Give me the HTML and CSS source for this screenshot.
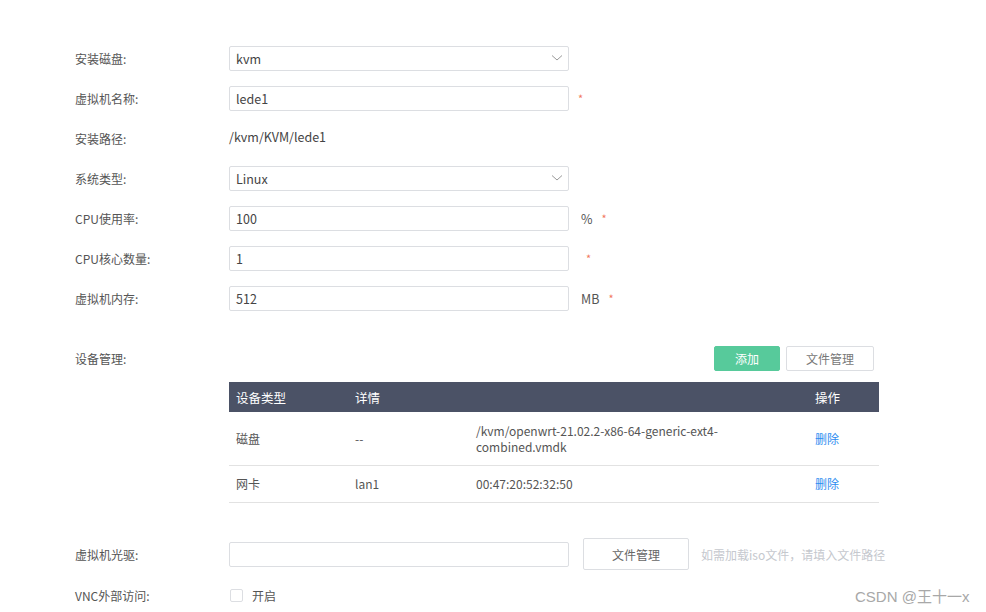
FILE: index.html
```html
<!DOCTYPE html>
<html lang="zh-CN">
<head>
    <meta charset="UTF-8">
    <title>虚拟机</title>
    <link rel="stylesheet" href="styles.css">
</head>
<body>
    <div class="form">
        <!-- basic settings -->
        <div class="row">
            <div class="label">安装磁盘:</div>
            <div class="select">
                <span>kvm</span>
                <svg width="12" height="8" viewBox="0 0 12 8"><path d="M1 1.5 L6 6 L11 1.5" fill="none" stroke="#9a9a9a" stroke-width="1"/></svg>
            </div>
        </div>
        <div class="row">
            <div class="label">虚拟机名称:</div>
            <div class="input">lede1</div>
            <span class="req">*</span>
        </div>
        <div class="row">
            <div class="label">安装路径:</div>
            <div class="plain">/kvm/KVM/lede1</div>
        </div>
        <div class="row">
            <div class="label">系统类型:</div>
            <div class="select">
                <span>Linux</span>
                <svg width="12" height="8" viewBox="0 0 12 8"><path d="M1 1.5 L6 6 L11 1.5" fill="none" stroke="#9a9a9a" stroke-width="1"/></svg>
            </div>
        </div>
        <div class="row">
            <div class="label">CPU使用率:</div>
            <div class="input">100</div>
            <span class="unit">%</span><span class="req">*</span>
        </div>
        <div class="row">
            <div class="label">CPU核心数量:</div>
            <div class="input">1</div>
            <span class="req req-far">*</span>
        </div>
        <div class="row">
            <div class="label">虚拟机内存:</div>
            <div class="input">512</div>
            <span class="unit">MB</span><span class="req">*</span>
        </div>

        <!-- devices -->
        <div class="row device-head">
            <div class="label">设备管理:</div>
            <div class="toolbar">
                <button class="btn btn-green">添加</button>
                <button class="btn">文件管理</button>
            </div>
        </div>
        <div class="table-wrap">
            <table class="devices">
                <colgroup>
                    <col style="width:119px">
                    <col style="width:121px">
                    <col style="width:339px">
                    <col>
                </colgroup>
                <thead>
                    <tr><th>设备类型</th><th>详情</th><th></th><th>操作</th></tr>
                </thead>
                <tbody>
                    <tr class="tall">
                        <td>磁盘</td><td>--</td>
                        <td>/kvm/openwrt-21.02.2-x86-64-generic-ext4-combined.vmdk</td>
                        <td><a href="#">删除</a></td>
                    </tr>
                    <tr>
                        <td>网卡</td><td>lan1</td><td>00:47:20:52:32:50</td>
                        <td><a href="#">删除</a></td>
                    </tr>
                </tbody>
            </table>
        </div>

        <!-- optical drive + vnc -->
        <div class="row cd-row">
            <div class="label">虚拟机光驱:</div>
            <div class="input"></div>
            <button class="btn btn-big">文件管理</button>
            <span class="hint">如需加载iso文件，请填入文件路径</span>
        </div>
        <div class="row vnc-row">
            <div class="label">VNC外部访问:</div>
            <label class="check"><span class="box"></span>开启</label>
        </div>
    </div>

    <div class="watermark">CSDN @王十一x</div>
</body>
</html>
```

FILE: styles.css
```css
html, body {
    margin: 0;
    padding: 0;
    background: #ffffff;
    color: #555;
    font-family: "Noto Sans CJK SC", "Noto Sans", sans-serif;
    font-size: 12px;
}

.form {
    padding: 38px 0 0 75px;
}

/* one form line */
.row {
    display: flex;
    align-items: center;
    height: 40px;
}

.label {
    width: 154px;
    flex-shrink: 0;
    color: #555;
}

.input,
.select {
    box-sizing: border-box;
    width: 340px;
    height: 25px;
    border: 1px solid #dcdee2;
    border-radius: 2px;
    padding: 0 6px;
    display: flex;
    align-items: center;
    color: #444;
    font-size: 12.5px;
}

.select {
    justify-content: space-between;
    padding-right: 5px;
}

.plain {
    color: #444;
    font-size: 12.5px;
    margin-top: -4px;
}

.unit {
    margin-left: 12px;
    color: #555;
    font-size: 12.5px;
}

.req {
    color: #ed4014;
    margin-left: 9px;
    font-size: 11px;
    opacity: 0.7;
}

.req-far {
    margin-left: 17px;
}

/* device management */
.device-head {
    margin-top: 20px;
}

.toolbar {
    width: 650px;
    display: flex;
    justify-content: flex-end;
    gap: 6px;
    padding-right: 5px;
    box-sizing: border-box;
}

.btn {
    box-sizing: border-box;
    height: 25px;
    min-width: 66px;
    padding: 0 19px;
    border: 1px solid #dcdee2;
    border-radius: 2px;
    background: #fff;
    color: #777;
    font-family: inherit;
    font-size: 12px;
}

.btn-green {
    background: #57ca9b;
    border-color: #57ca9b;
    color: #fff;
}

.table-wrap {
    padding: 4px 0 0 154px;
}

.devices {
    width: 650px;
    border-collapse: collapse;
    table-layout: fixed;
}

.devices th {
    background: #4b5266;
    color: #fff;
    font-weight: normal;
    text-align: left;
    height: 30px;
    padding: 0 7px;
    font-size: 12.5px;
}

.devices td {
    height: 36px;
    padding: 0 7px;
    border-bottom: 1px solid #e2e2e2;
    color: #555;
    line-height: 16px;
}

.devices tr.tall td {
    height: 53px;
}

.devices a {
    color: #2d8cf0;
    text-decoration: none;
}

/* optical drive */
.cd-row {
    margin-top: 31px;
}

.vnc-row {
    margin-top: 1px;
}

.btn-big {
    height: 32px;
    width: 106px;
    margin-left: 14px;
    color: #666;
}

.hint {
    margin-left: 12px;
    color: #c5c8ce;
}

.check {
    display: flex;
    align-items: center;
    gap: 9px;
    color: #555;
}

.box {
    width: 11px;
    height: 11px;
    border: 1px solid #dcdee2;
    border-radius: 2px;
    margin-left: 1px;
}

/* watermark sits over the page corner */
.watermark {
    position: absolute;
    left: 855px;
    top: 585px;
    color: #a8a8a8;
    font-family: "Liberation Sans", Arial, sans-serif;
    font-size: 15px;
}
```
